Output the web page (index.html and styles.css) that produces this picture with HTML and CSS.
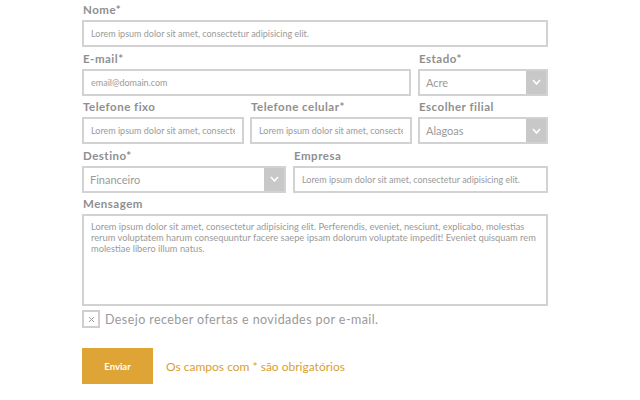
FILE: index.html
```html
<!DOCTYPE html>
<html lang="pt-BR">
<head>
<meta charset="utf-8">
<title>Contato</title>
<link rel="stylesheet" href="styles.css">
</head>
<body>
<form class="form">
  <div class="field">
    <label class="label">Nome*</label>
    <input class="input" type="text" placeholder="Lorem ipsum dolor sit amet, consectetur adipisicing elit.">
  </div>
  <div class="row row-email">
    <div class="field">
      <label class="label">E-mail*</label>
      <input class="input" type="text" placeholder="email@domain.com">
    </div>
    <div class="field">
      <label class="label">Estado*</label>
      <div class="select"><span class="select-value">Acre</span><span class="select-arrow"><svg width="9" height="6" viewBox="0 0 9 6"><polyline points="1,1 4.5,5 8,1" fill="none" stroke="#fff" stroke-width="1.6"/></svg></span></div>
    </div>
  </div>
  <div class="row row-phone">
    <div class="field">
      <label class="label">Telefone fixo</label>
      <input class="input" type="text" placeholder="Lorem ipsum dolor sit amet, consectetur adipisicing elit.">
    </div>
    <div class="field">
      <label class="label">Telefone celular*</label>
      <input class="input" type="text" placeholder="Lorem ipsum dolor sit amet, consectetur adipisicing elit.">
    </div>
    <div class="field">
      <label class="label">Escolher filial</label>
      <div class="select"><span class="select-value">Alagoas</span><span class="select-arrow"><svg width="9" height="6" viewBox="0 0 9 6"><polyline points="1,1 4.5,5 8,1" fill="none" stroke="#fff" stroke-width="1.6"/></svg></span></div>
    </div>
  </div>
  <div class="row row-dest">
    <div class="field">
      <label class="label">Destino*</label>
      <div class="select"><span class="select-value">Financeiro</span><span class="select-arrow"><svg width="9" height="6" viewBox="0 0 9 6"><polyline points="1,1 4.5,5 8,1" fill="none" stroke="#fff" stroke-width="1.6"/></svg></span></div>
    </div>
    <div class="field">
      <label class="label">Empresa</label>
      <input class="input" type="text" placeholder="Lorem ipsum dolor sit amet, consectetur adipisicing elit.">
    </div>
  </div>
  <div class="field">
    <label class="label">Mensagem</label>
    <div class="textarea">Lorem ipsum dolor sit amet, consectetur adipisicing elit. Perferendis, eveniet, nesciunt, explicabo, molestias<br>rerum voluptatem harum consequuntur facere saepe ipsam dolorum voluptate impedit! Eveniet quisquam rem<br>molestiae libero illum natus.</div>
  </div>
  <div class="check-row">
    <span class="checkbox"><svg width="7" height="7" viewBox="0 0 7 7"><path d="M1 1L6 6M6 1L1 6" stroke="#9a9a9a" stroke-width="1"/></svg></span>
    <span class="check-label">Desejo receber ofertas e novidades por e-mail.</span>
  </div>
  <div class="submit-row">
    <button class="btn" type="button">Enviar</button>
    <span class="note">Os campos com * são obrigatórios</span>
  </div>
</form>
</body>
</html>
```

FILE: styles.css
```css
* { box-sizing: border-box; }
html, body { margin: 0; padding: 0; background: #fff; }
body { font-family: Lato, "Open Sans", sans-serif; }

.form {
  width: 548px;
  padding: 2px 0 0 82px;
}

.field {
  display: flex;
  flex-direction: column;
  margin-bottom: 3.5px;
}

.label {
  font-size: 11.5px;
  font-weight: 700;
  line-height: 15px;
  letter-spacing: 0.5px;
  color: #8f8f8f;
  margin-bottom: 3px;
  padding-left: 1px;
}

.input {
  height: 27px;
  border: 2px solid #d2d2d2;
  padding: 0 7px;
  font-family: Lato, sans-serif;
  font-size: 9px;
  color: #9a9a9a;
  background: #fff;
  outline: none;
  width: 100%;
  min-width: 0;
}
.input::placeholder { color: #9a9a9a; }

.row { display: grid; column-gap: 7px; }
.row-email { grid-template-columns: 1fr 130px; }
.row-phone { grid-template-columns: 1fr 1fr 130px; column-gap: 6.5px; }
.row-dest { grid-template-columns: 204px 1fr; }

.select {
  height: 27px;
  border: 2px solid #d2d2d2;
  display: flex;
  align-items: stretch;
  background: #fff;
}
.select-value {
  flex: 1;
  display: flex;
  align-items: center;
  padding-left: 6px;
  font-size: 11px;
  color: #9a9a9a;
}
.select-arrow {
  width: 20px;
  background: #c8c8c8;
  display: flex;
  align-items: center;
  justify-content: center;
}

.textarea {
  height: 92px;
  border: 2px solid #d2d2d2;
  padding: 5px 7px;
  font-size: 9.3px;
  line-height: 11px;
  color: #9a9a9a;
  white-space: nowrap;
  overflow: hidden;
}

.check-row {
  display: flex;
  align-items: center;
  gap: 5px;
  margin-top: 4px;
}
.checkbox {
  width: 18px;
  height: 18px;
  border: 2px solid #cfcfcf;
  display: flex;
  align-items: center;
  justify-content: center;
}
.check-label {
  font-size: 12.5px;
  letter-spacing: 0.42px;
  color: #9a9a9a;
}

.submit-row {
  display: flex;
  align-items: center;
  gap: 13px;
  margin-top: 20px;
}
.btn {
  width: 71px;
  height: 36px;
  border: 0;
  background: #dea435;
  color: #fff;
  font-family: Lato, sans-serif;
  font-weight: 700;
  font-size: 9.5px;
  padding: 0;
}
.note {
  font-size: 12px;
  color: #d9a032;
}
```
